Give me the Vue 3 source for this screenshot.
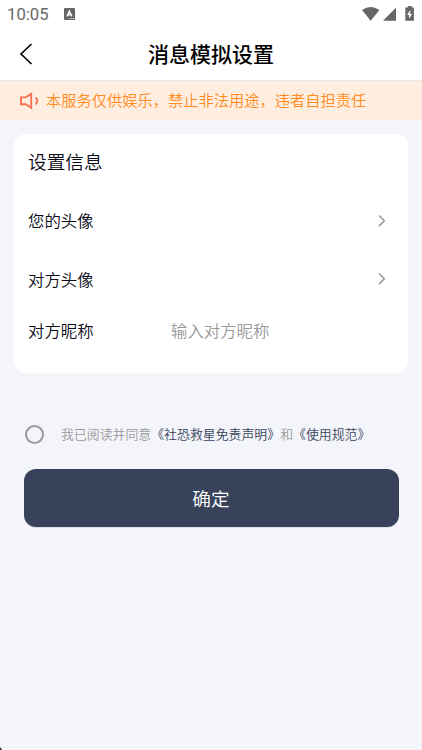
<script setup>
import { ref } from 'vue'

const nickname = ref('')
const agreed = ref(false)
const avatarRows = ['您的头像', '对方头像']
</script>

<template>
  <div class="page">
    <header class="top">
      <div class="status">
        <span class="time">10:05</span>
        <svg class="app-icon" width="11" height="12" viewBox="0 0 11 12">
          <rect width="11" height="12" rx="1" fill="#666" />
          <path d="M3 8.4 5.4 3.1 7.8 8.4M3.8 6.8H7" fill="none" stroke="#fff" stroke-width="1.4" />
          <path d="M5.5 10.5h1m1 0h1m.8 0h1" stroke="#fff" stroke-width="1" />
        </svg>
        <svg class="signals" width="54" height="16" viewBox="0 0 54 16">
          <path d="M1 4.1Q9.7 -1.9 18.4 4.1L9.7 14.8Z" fill="#666" />
          <path d="M35 1.8V14.8H22Z" fill="#666" />
          <path d="M46.8 0h4v1.5h2.1V14.8h-8.6V1.5h2.5Z" fill="#666" />
          <path d="M49.4 4 46.1 8.9h2v3.8l3-4.8h-1.9Z" fill="#fff" />
        </svg>
      </div>
      <nav class="nav">
        <svg class="back" width="14" height="22" viewBox="0 0 14 22">
          <path d="M12.5 1 2 11l10.5 10" fill="none" stroke="#000" stroke-width="1.6" />
        </svg>
        <h1>消息模拟设置</h1>
      </nav>
    </header>

    <div class="notice">
      <svg width="20" height="18" viewBox="0 0 20 18" fill="none" stroke="#fb7154" stroke-width="1.9">
        <path d="M1 5.4h4.7L11.2 2v13.7L5.7 12.3H1Z" />
        <path d="M15.6 5.5q3.5 3.3 0 6.8" />
      </svg>
      <span>本服务仅供娱乐，禁止非法用途，违者自担责任</span>
    </div>

    <section class="card">
      <h2>设置信息</h2>
      <div v-for="row in avatarRows" :key="row" class="row">
        <span>{{ row }}</span>
        <svg width="8" height="13" viewBox="0 0 8 13">
          <path d="M1 1.5 6.3 6.8 1 12.1" fill="none" stroke="#999" stroke-width="1.6" />
        </svg>
      </div>
      <label class="row input-row">
        <span>对方昵称</span>
        <input v-model="nickname" placeholder="输入对方昵称" />
      </label>
    </section>

    <div class="agreement">
      <button class="radio" :aria-pressed="agreed" @click="agreed = !agreed"></button>
      <p>我已阅读并同意<a>《社恐救星免责声明》</a>和<a>《使用规范》</a></p>
    </div>
    <button class="submit">确定</button>
    <i class="corner"></i>
  </div>
</template>

<style>
body {
  margin: 0;
  background: #f4f5fa;
}
</style>

<style scoped>
.page {
  position: relative;
  box-sizing: border-box;
  height: 750px;
  overflow: hidden;
  background: #f4f5fa;
  color: #0c0c18;
  font-family: "Noto Sans CJK SC", sans-serif;
  font-weight: 350;
}
.top {
  box-sizing: border-box;
  height: 81px;
  background: #fff;
  border-bottom: 1px solid #e8e6e6;
}
.status {
  display: flex;
  align-items: center;
  height: 28px;
  padding: 0 8px 0 7px;
  color: #666;
}
.time {
  width: 57px;
  font-family: Roboto, sans-serif;
  font-size: 16.7px;
  font-weight: 450;
  line-height: 28px;
  padding-top: 1px;
}
.signals {
  margin-left: auto;
  margin-right: -1px;
}
.nav {
  display: grid;
  grid-template-columns: 40px 1fr 40px;
  align-items: center;
  height: 52px;
}
.back {
  margin-left: 19px;
}
h1 {
  margin: 0;
  padding-bottom: 2px;
  color: #000;
  font-size: 21px;
  font-weight: 500;
  line-height: 50px;
  text-align: center;
}
.notice {
  display: flex;
  align-items: center;
  gap: 6px;
  height: 39px;
  padding-left: 20px;
  background: #ffeee0;
  color: #ff8a20;
  font-size: 15.25px;
  white-space: nowrap;
}
.notice span {
  line-height: 20px;
  padding-bottom: 3px;
}
.card {
  box-sizing: border-box;
  height: 239px;
  margin: 14px 14px 0;
  padding: 0 22px 0 14px;
  border-radius: 12px;
  background: #fff;
}
h2 {
  box-sizing: border-box;
  margin: 0;
  padding-top: 7px;
  height: 57px;
  font-size: 18.7px;
  font-weight: inherit;
  line-height: 40px;
}
.row {
  display: flex;
  align-items: center;
  justify-content: space-between;
  height: 58.5px;
  font-size: 16.4px;
}
.input-row {
  justify-content: flex-start;
  height: 43px;
}
.input-row span {
  width: 143px;
  line-height: 24px;
}
input {
  width: 180px;
  height: 24px;
  padding: 0;
  border: 0;
  outline: 0;
  background: transparent;
  color: #0c0c18;
  font: inherit;
  line-height: 24px;
}
input::placeholder {
  color: #999;
  opacity: 1;
}
.agreement {
  display: flex;
  align-items: center;
  height: 40px;
  margin-top: 41px;
  padding-left: 25px;
  color: #999;
  font-size: 12.9px;
  white-space: nowrap;
}
.agreement p {
  margin: 0;
  padding-bottom: 2px;
}
.agreement a {
  color: #38435b;
}
.radio {
  box-sizing: border-box;
  width: 19px;
  height: 19px;
  margin: 0 17px 0 0;
  padding: 0;
  border: 2px solid #999;
  border-radius: 50%;
  background: transparent;
}
.submit {
  display: block;
  width: 375px;
  height: 58px;
  margin: 15px auto 0;
  padding: 0;
  border: 0;
  border-radius: 12px;
  background: #38435b;
  box-shadow: 0 1px 0 #dfe1e7;
  color: #fff;
  font: inherit;
  font-size: 18.7px;
  line-height: 56px;
}
.corner {
  position: absolute;
  left: 0;
  bottom: 0;
  width: 2px;
  height: 3px;
  background: #222;
  clip-path: polygon(0 0, 100% 100%, 0 100%);
}
</style>
